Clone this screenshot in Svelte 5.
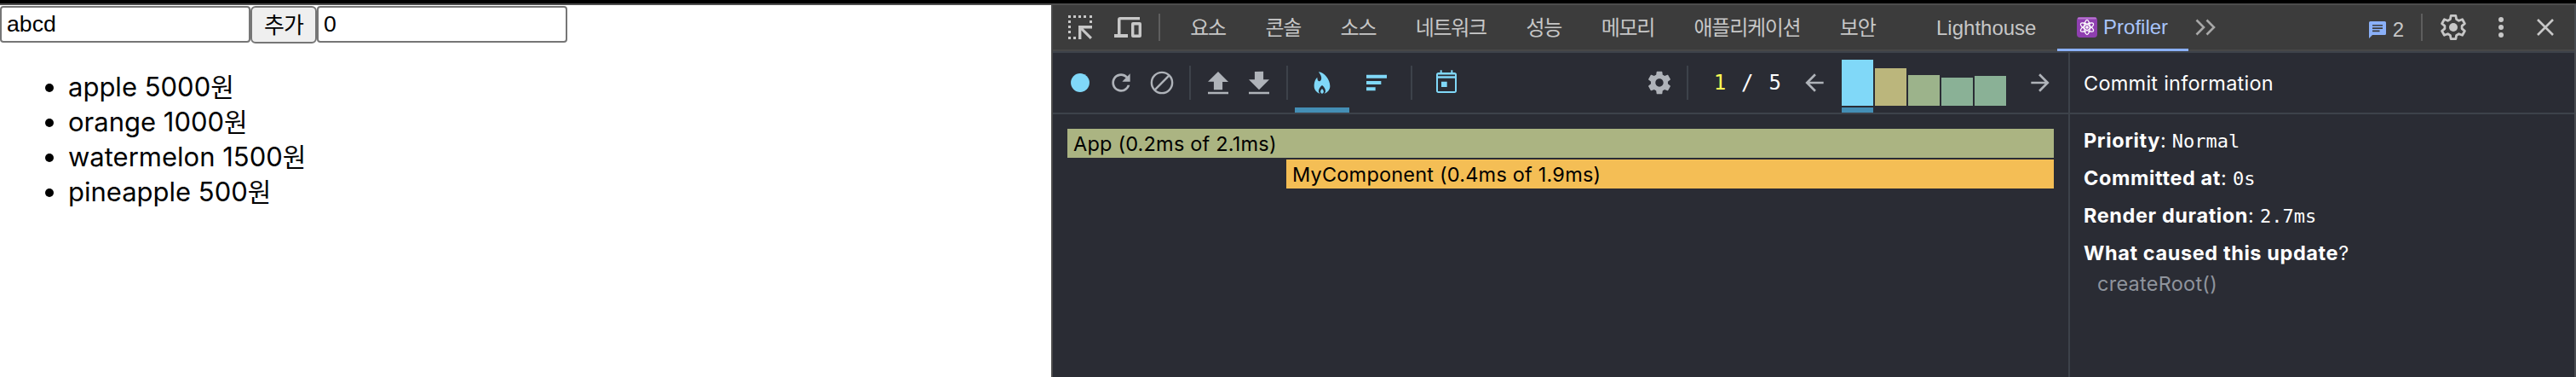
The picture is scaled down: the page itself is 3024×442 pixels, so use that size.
<script lang="ts">
  interface Commit {
    height: number;
    color: string;
  }

  const fruits = [
    { name: 'apple', price: 5000 },
    { name: 'orange', price: 1000 },
    { name: 'watermelon', price: 1500 },
    { name: 'pineapple', price: 500 },
  ];

  const tabs = ['요소', '콘솔', '소스', '네트워크', '성능', '메모리', '애플리케이션', '보안'];

  const commits: Commit[] = [
    { height: 54, color: '#80d8f8' },
    { height: 44, color: '#bbb67c' },
    { height: 36, color: '#9cb38b' },
    { height: 33, color: '#8ab196' },
    { height: 35, color: '#8ab196' },
  ];

  const icons = {
    reload:
      'M17.65 6.35C16.2 4.9 14.21 4 12 4c-4.42 0-7.99 3.58-7.99 8s3.57 8 7.99 8c3.73 0 6.84-2.55 7.73-6h-2.08c-.82 2.33-3.04 4-5.65 4-3.31 0-6-2.69-6-6s2.69-6 6-6c1.66 0 3.14.69 4.22 1.78L13 11h7V4l-2.35 2.35z',
    upload: 'M8.18 18.13v-7H3l9-8.95 9 9h-5.18v7zM3 20.13h18v1.73H3z',
    download: 'M15.82 2.14v7H21l-9 9-9-8.96h5.18v-7zM3 20.13h18v1.73H3z',
    gear:
      'M19.43 12.98c.04-.32.07-.64.07-.98s-.03-.66-.07-.98l2.11-1.65c.19-.15.24-.42.12-.64l-2-3.46c-.12-.22-.39-.3-.61-.22l-2.49 1c-.52-.4-1.08-.73-1.69-.98l-.38-2.65C14.46 2.18 14.25 2 14 2h-4c-.25 0-.46.18-.49.42l-.38 2.65c-.61.25-1.17.59-1.69.98l-2.49-1c-.23-.09-.49 0-.61.22l-2 3.46c-.13.22-.07.49.12.64l2.11 1.65c-.04.32-.07.65-.07.98s.03.66.07.98l-2.11 1.65c-.19.15-.24.42-.12.64l2 3.46c.12.22.39.3.61.22l2.49-1c.52.4 1.08.73 1.69.98l.38 2.65c.03.24.24.42.49.42h4c.25 0 .46-.18.49-.42l.38-2.65c.61-.25 1.17-.59 1.69-.98l2.49 1c.23.09.49 0 .61-.22l2-3.46c.12-.22.07-.49-.12-.64l-2.11-1.65zM12 15.5c-1.93 0-3.5-1.57-3.5-3.5s1.57-3.5 3.5-3.5 3.5 1.57 3.5 3.5-1.57 3.5-3.5 3.5z',
    ranked: 'M3 5h18v3H3zM3 10.5h13v3H3zM3 16h8v3H3z',
    back: 'M20 11H7.83l5.59-5.59L12 4l-8 8 8 8 1.41-1.41L7.83 13H20v-2z',
    next: 'M12 4l-1.41 1.41L16.17 11H4v2h12.17l-5.58 5.59L12 20l8-8z',
    flame:
      'M10.07 21.5C7.14 20.69 5 18.06 5 14.94c0-.92 0-5.12 2.83-7.56 0 0-.25 3.82 2.17 3.25 1.13-.3 3-3-1.08-8.13C14.17 3.07 19 9.33 19 14.94c0 3.12-2.14 5.75-5.07 6.56.75-.62 1.07-1.3 1.07-2.1 0-2-1.5-3.9-3-5.1-1.5 1.2-3 3.1-3 5.1 0 .8.32 1.48 1.07 2.1zM12 17.2c.9.9 1.4 1.8 1.4 2.7 0 .9-.6 1.6-1.4 1.6s-1.4-.7-1.4-1.6c0-.9.5-1.8 1.4-2.7z',
  };
</script>

<div class="window">
  <main class="page">
    <div class="form">
      <input class="field" value="abcd" />
      <button class="add">추가</button>
      <input class="field" value="0" />
    </div>
    <ul class="fruits">
      {#each fruits as fruit}
        <li>{fruit.name} {fruit.price}<span class="won">원</span></li>
      {/each}
    </ul>
  </main>

  <section class="devtools">
    <nav class="tabbar">
      <svg class="inspect" width="28" height="28" viewBox="0 0 28 28">
        <path d="M0 0h3v3h-3zM6 0h3v3h-3zM12 0h3v3h-3zM18 0h3v3h-3zM25 0h3v3h-3zM25 6h3v3h-3zM0 6h3v3h-3zM0 12h3v3h-3zM0 18h3v3h-3zM0 25h3v3h-3zM6 25h3v3h-3z" />
        <path d="M12 12h16v3.4H17.6L28 25.8 25.8 28 15.4 17.6V28H12z" />
      </svg>
      <svg class="device" width="32" height="24" viewBox="0 0 32 24">
        <path d="M4 20V3q0-3 3-3h23v3.3H7.5V20H16v4H0v-4z" />
        <path fill-rule="evenodd" d="M22 6h8q2 0 2 2v14q0 2-2 2h-8q-2 0-2-2V8q0-2 2-2zm1.4 3.4v11.2h5.2V9.4z" />
      </svg>
      <span class="rule"></span>
      <div class="tabs">
        {#each tabs as tab}
          <span class="tab">{tab}</span>
        {/each}
        <span class="tab latin">Lighthouse</span>
        <span class="tab latin active">
          <svg class="atom" width="24" height="24" viewBox="0 0 24 24">
            <rect width="24" height="24" rx="4" fill="#8f3fb0" />
            <rect x="1" y="0.5" width="22" height="2" rx="1" fill="#b877ce" />
            <g fill="none" stroke="#fff" stroke-width="1.3">
              <ellipse cx="12" cy="12" rx="3.2" ry="8.6" />
              <ellipse cx="12" cy="12" rx="3.2" ry="8.6" transform="rotate(60 12 12)" />
              <ellipse cx="12" cy="12" rx="3.2" ry="8.6" transform="rotate(120 12 12)" />
            </g>
            <circle cx="12" cy="12" r="1.7" fill="#fff" />
          </svg>
          Profiler
        </span>
      </div>
      <svg class="more" width="24" height="20" viewBox="0 0 24 20">
        <path d="M1.5 1.5 10 10l-8.5 8.5M13.5 1.5 22 10l-8.5 8.5" />
      </svg>
      <div class="actions">
        <svg width="20" height="20" viewBox="0 0 20 20">
          <path fill="#8ab0f8" d="M1.5 0h17q1.5 0 1.5 1.5V14.5q0 1.5-1.5 1.5H4l-4 4V1.5Q0 0 1.5 0z" />
          <path fill="#3c3c3c" d="M4 4h12v1.6H4zM4 7.3h12v1.6H4zM4 10.6h8.5v1.6H4z" />
        </svg>
        <span class="count">2</span>
        <span class="rule"></span>
        <svg class="settings" width="32" height="32" viewBox="0 0 32 32">
          <path
            class="outline"
            d="M13.2 2.3h5.6l.8 4.3 2.9 1.7 4.1-1.5 2.8 4.9-3.3 2.7v3.2l3.3 2.7-2.8 4.9-4.1-1.5-2.9 1.7-.8 4.3h-5.6l-.8-4.3-2.9-1.7-4.1 1.5-2.8-4.900 3.3-2.7v-3.2l-3.3-2.7 2.8-4.9 4.1 1.5 2.9-1.7z"
          />
          <circle cx="16" cy="16" r="5" />
        </svg>
        <svg class="menu" width="6" height="24" viewBox="0 0 6 24">
          <circle cx="3" cy="3" r="3" />
          <circle cx="3" cy="12" r="3" />
          <circle cx="3" cy="21" r="3" />
        </svg>
        <svg class="close" width="20" height="20" viewBox="0 0 20 20">
          <path d="M1 1l18 18M19 1L1 19" />
        </svg>
      </div>
    </nav>

    <div class="profiler">
      <div class="left">
        <div class="toolbar">
          <div class="buttons">
            <svg class="icon on" viewBox="0 0 24 24"><circle cx="12" cy="12" r="8.2" /></svg>
            <svg class="icon" viewBox="0 0 24 24"><path d={icons.reload} /></svg>
            <svg class="icon stroked" viewBox="0 0 24 24">
              <circle cx="12" cy="12" r="9.1" />
              <path d="M5.6 18.4 18.4 5.6" />
            </svg>
          </div>
          <span class="split"></span>
          <div class="buttons">
            <svg class="icon" viewBox="0 0 24 24"><path d={icons.upload} /></svg>
            <svg class="icon" viewBox="0 0 24 24"><path d={icons.download} /></svg>
          </div>
          <span class="split"></span>
          <div class="views">
            <span class="view selected">
              <svg class="icon on" viewBox="0 0 24 24"><path fill-rule="evenodd" d={icons.flame} /></svg>
            </span>
            <span class="view">
              <svg class="icon on" viewBox="0 0 24 24"><path d={icons.ranked} /></svg>
            </span>
          </div>
          <span class="split"></span>
          <span class="view">
            <svg class="icon on" viewBox="0 0 24 24">
              <path
                fill-rule="evenodd"
                d="M6.5 1H8v2h8V1h1.5v2H19q2 0 2 2v14q0 2-2 2H5q-2 0-2-2V5q0-2 2-2h1.5zM4.5 4.8v1.4h15V4.8zM4.5 8v11.5h15V8zM7.5 11h5v4.700h-5z"
              />
            </svg>
          </span>
          <svg class="icon gear" viewBox="0 0 24 24"><path d={icons.gear} /></svg>
          <span class="split"></span>
          <div class="counter"><span class="current">1</span><span>/</span><span>5</span></div>
          <svg class="icon" viewBox="0 0 24 24"><path d={icons.back} /></svg>
          <div class="commits">
            {#each commits as commit, i}
              <span class="commit" class:picked={i === 0}>
                <span class="bar" style:height="{commit.height}px" style:background={commit.color}></span>
              </span>
            {/each}
          </div>
          <svg class="icon" viewBox="0 0 24 24"><path d={icons.next} /></svg>
        </div>
        <div class="chart">
          <div class="node root">App (0.2ms of 2.1ms)</div>
          <div class="node child">MyComponent (0.4ms of 1.9ms)</div>
        </div>
      </div>

      <aside class="info">
        <div class="heading">Commit information</div>
        <div class="details">
          <div><b>Priority</b>: <code>Normal</code></div>
          <div><b>Committed at</b>: <code>0s</code></div>
          <div><b>Render duration</b>: <code>2.7ms</code></div>
          <div><b>What caused this update</b>?</div>
          <div class="cause">createRoot()</div>
        </div>
      </aside>
    </div>
  </section>
</div>

<style>
  :global(body) {
    background: #fff;
  }

  .window {
    display: flex;
    box-sizing: border-box;
    width: 3024px;
    height: 442px;
    overflow: hidden;
    border-top: 4px solid #000;
  }

  .window * {
    box-sizing: border-box;
  }

  svg {
    flex-shrink: 0;
    fill: #c7c7c7;
  }

  .page {
    width: 1234px;
    border-top: 2px solid #4d4d4d;
    font-family: Inter, 'Noto Sans CJK KR', sans-serif;
    color: #000;
  }

  .form {
    display: flex;
    align-items: flex-start;
    padding-top: 1px;
  }

  .field {
    width: 294px;
    height: 43px;
    margin: 0;
    padding: 0 6px;
    border: 2px solid #767676;
    border-radius: 4px;
    background: #fff;
    font: 26.67px 'Liberation Sans', sans-serif;
    color: #000;
  }

  .add {
    width: 78px;
    height: 44px;
    padding: 0 0 2px;
    border: 2px solid #767676;
    border-radius: 6px;
    background: #efefef;
    font: 26px/36px 'Noto Sans CJK KR', sans-serif;
    letter-spacing: -1px;
    color: #000;
  }

  .fruits {
    margin: 30px 0 0;
    padding-left: 80px;
    font-size: 31px;
    line-height: 41px;
  }

  .fruits li {
    height: 41px;
  }

  .won {
    font: 30px/30px 'Noto Sans CJK KR', sans-serif;
  }

  .devtools {
    display: flex;
    flex-direction: column;
    width: 1790px;
    border-top: 2px solid #4d4d4d;
    border-right: 2px solid #494c51;
    border-left: 2px solid #4a4a4a;
    background: #2a2c34;
  }

  .tabbar {
    display: flex;
    align-items: center;
    height: 54px;
    padding-left: 18px;
    border-bottom: 2px solid #474747;
    background: #3c3c3c;
    color: #c7c7c7;
  }

  .device {
    margin-left: 26px;
  }

  .rule {
    width: 2px;
    height: 32px;
    background: #5e5e5e;
  }

  .device + .rule {
    margin-left: 20px;
  }

  .tabs {
    display: flex;
    margin-left: 12px;
  }

  .tab {
    height: 54px;
    margin-bottom: -2px;
    padding: 0 23.3px;
    font: 24px/50px 'Noto Sans CJK KR', sans-serif;
    letter-spacing: -1.3px;
    white-space: nowrap;
  }

  .latin {
    margin-left: 25px;
    font: 24px/54px 'Liberation Sans', sans-serif;
    letter-spacing: 0;
  }

  .active {
    display: flex;
    align-items: center;
    gap: 7px;
    width: 154px;
    margin-left: 1px;
    border-bottom: 3px solid #8ab0f8;
    color: #a8c4fa;
  }

  .more {
    margin-left: 8px;
  }

  .more path,
  .close path {
    fill: none;
    stroke: #c7c7c7;
    stroke-width: 2.6;
  }

  .more path {
    stroke: #a8a8a8;
  }

  .actions {
    display: flex;
    align-items: center;
    margin-left: auto;
    padding-right: 24px;
  }

  .actions > svg:first-child {
    margin-top: 6px;
  }

  .count {
    margin: 5px 20px 0 8px;
    font: 24px/40px 'Liberation Sans', sans-serif;
  }

  .settings {
    margin-left: 20px;
  }

  .outline {
    fill: none;
    stroke: #c7c7c7;
    stroke-width: 2.8;
    stroke-linejoin: round;
  }

  .menu {
    margin-left: 37px;
  }

  .close {
    margin-left: 39px;
  }

  .profiler {
    display: flex;
    flex: 1;
    border-top: 2px solid #3d424a;
  }

  .left {
    width: 1192px;
  }

  .toolbar {
    display: flex;
    align-items: center;
    height: 72px;
    padding: 0 17px 0 16px;
    border-bottom: 2px solid #3d424a;
  }

  .buttons {
    display: flex;
    gap: 16px;
  }

  .icon {
    width: 32px;
    height: 32px;
    fill: #afb3b9;
  }

  .icon.on {
    fill: #80d8f8;
  }

  .stroked circle,
  .stroked path {
    fill: none;
    stroke: #afb3b9;
    stroke-width: 1.8;
  }

  .split {
    width: 2px;
    height: 40px;
    background: #3d424a;
  }

  .buttons + .split {
    margin-left: 16px;
  }

  .split + .buttons {
    margin-left: 16px;
  }

  .views {
    display: flex;
    margin: 0 8px;
  }

  .view {
    display: flex;
    align-items: center;
    justify-content: center;
    width: 64px;
    height: 70px;
  }

  .split + .view {
    margin-left: 8px;
  }

  .selected {
    padding-top: 6px;
    border-bottom: 6px solid #448eb5;
  }

  .gear {
    margin-left: auto;
  }

  .gear + .split {
    margin-left: 16px;
  }

  .counter {
    display: flex;
    gap: 18px;
    margin: 0 23px 0 30px;
    font: 24px/34px 'DejaVu Sans Mono', monospace;
    color: #fff;
  }

  .current {
    color: #ffff55;
  }

  .commits {
    display: flex;
    gap: 2px;
    width: 217px;
    height: 70px;
    margin-left: 16px;
  }

  .commit {
    display: flex;
    align-items: flex-end;
    width: 37px;
    padding-bottom: 2px;
    border-bottom: 6px solid transparent;
  }

  .picked {
    border-bottom-color: #448eb5;
  }

  .bar {
    width: 100%;
  }

  .chart {
    display: flex;
    flex-direction: column;
    align-items: flex-end;
    gap: 2px;
    padding: 17px 17px 0;
  }

  .node {
    height: 34px;
    padding-left: 7px;
    font: 23.5px/36px Inter, sans-serif;
    letter-spacing: 0.2px;
    color: #000;
  }

  .root {
    width: 1158px;
    background: #abb482;
  }

  .child {
    width: 901px;
    background: #f4be55;
  }

  .info {
    flex: 1;
    border-left: 2px solid #3d424a;
    font: 23.5px/34px Inter, sans-serif;
    letter-spacing: 0.25px;
    color: #fff;
  }

  .heading {
    height: 72px;
    padding-left: 16px;
    border-bottom: 2px solid #3d424a;
    line-height: 72px;
  }

  .details {
    padding: 14px 16px;
  }

  .details div {
    height: 44px;
    white-space: nowrap;
  }

  .details b {
    font-weight: 700;
    letter-spacing: 0.6px;
  }

  .details code {
    font: 22px/34px 'DejaVu Sans Mono', monospace;
    letter-spacing: 0;
  }

  .details .cause {
    margin-top: -8px;
    padding-left: 16px;
    color: #8f949d;
  }
</style>
